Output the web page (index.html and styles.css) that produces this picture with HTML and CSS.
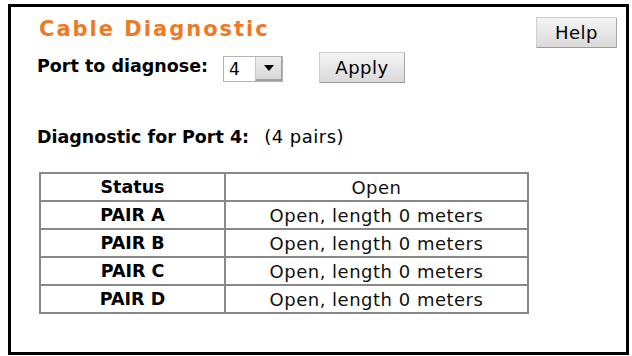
FILE: index.html
```html
<!DOCTYPE html>
<html>
<head>
<meta charset="utf-8">
<link rel="stylesheet" href="styles.css">
</head>
<body>
<div class="frame">
  <div class="header">
    <h1 class="title">Cable Diagnostic</h1>
    <button class="btn btn-help">Help</button>
  </div>
  <div class="port-row">
    <span class="label">Port to diagnose:</span>
    <div class="select">
      <span class="select-value">4</span>
      <span class="select-arrow"><svg width="10" height="6" viewBox="0 0 10 6"><path d="M0 0H10L5 6Z" fill="#000"/></svg></span>
    </div>
    <button class="btn btn-apply">Apply</button>
  </div>
  <div class="diag-line">
    <span class="label">Diagnostic for Port 4:</span>
    <span class="pairs">(4 pairs)</span>
  </div>
  <table class="results">
    <tr><td class="key">Status</td><td class="val">Open</td></tr>
    <tr><td class="key">PAIR A</td><td class="val">Open, length 0 meters</td></tr>
    <tr><td class="key">PAIR B</td><td class="val">Open, length 0 meters</td></tr>
    <tr><td class="key">PAIR C</td><td class="val">Open, length 0 meters</td></tr>
    <tr><td class="key">PAIR D</td><td class="val">Open, length 0 meters</td></tr>
  </table>
</div>
</body>
</html>
```
FILE: styles.css
```css
html, body {
  margin: 0;
  padding: 0;
  background: #fff;
}
body {
  font-family: "DejaVu Sans", "Liberation Sans", sans-serif;
  color: #000;
}
.frame {
  box-sizing: border-box;
  margin: 4px 0 0 8px;
  width: 621px;
  height: 351px;
  border: 3px solid #000;
  padding: 10px 9px 0 26px;
  background: #fff;
}
.header {
  display: flex;
  justify-content: space-between;
  align-items: flex-start;
  height: 31px;
}
.title {
  margin: 0 0 0 2px;
  font-size: 21px;
  line-height: 24px;
  font-weight: bold;
  letter-spacing: 2px;
  color: #ee7a26;
}
.btn {
  box-sizing: border-box;
  height: 31px;
  padding: 0;
  font-family: "DejaVu Sans", "Liberation Sans", sans-serif;
  font-size: 18px;
  letter-spacing: 0.5px;
  color: #000;
  background: linear-gradient(#f4f4f4, #dadada);
  border: 1px solid #cfcfcf;
  border-right-color: #a8a8a8;
  border-bottom-color: #9a9a9a;
  border-radius: 1px;
}
.btn-help { width: 81px; }
.btn-apply { width: 86px; margin-left: 36px; }
.port-row {
  display: flex;
  align-items: flex-start;
  margin-top: 4px;
}
.label {
  font-weight: bold;
  font-size: 17.5px;
  line-height: 20px;
}
.port-row .label {
  margin-top: 4px;
  width: 186px;
}
.select {
  box-sizing: border-box;
  display: flex;
  width: 60px;
  height: 26px;
  margin-top: 4px;
  border: 1px solid #b4b4b4;
  background: #fff;
}
.select-value {
  flex: 1;
  font-size: 17px;
  line-height: 24px;
  padding-left: 5px;
}
.select-arrow {
  box-sizing: border-box;
  width: 27px;
  display: flex;
  align-items: center;
  justify-content: center;
  background: linear-gradient(#eeeeee, #d8d8d8);
  border-left: 1px solid #c8c8c8;
  border-bottom: 2px solid #a0a0a0;
  border-right: 1px solid #a0a0a0;
}
.diag-line {
  margin-top: 44px;
  line-height: 20px;
}
.pairs {
  font-size: 18px;
  letter-spacing: 0.5px;
  margin-left: 10px;
}
.results {
  margin: 24px 0 0 2px;
  border-collapse: collapse;
  width: 490px;
}
.results td {
  border: 2px solid #888;
  height: 26px;
  padding: 0;
  text-align: center;
  vertical-align: middle;
}
.results .key {
  width: 183px;
  font-weight: bold;
  font-size: 17.5px;
}
.results .val {
  font-size: 18px;
  letter-spacing: 0.5px;
  color: #111;
}
```
